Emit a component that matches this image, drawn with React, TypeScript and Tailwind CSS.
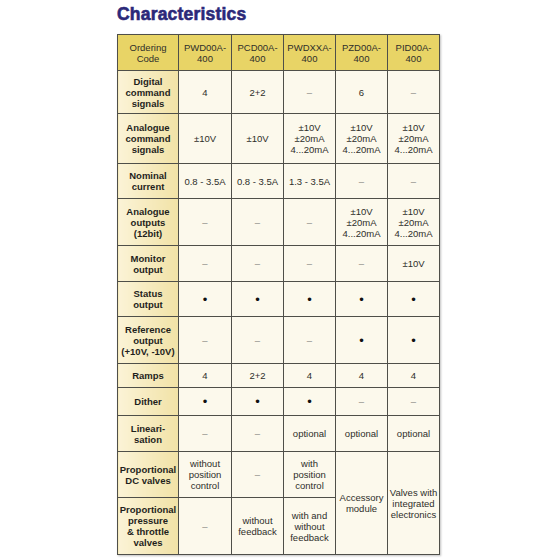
import React from 'react';

type Cell = { text: string[]; kind?: 'dash' | 'dot' | 'text'; rowSpan?: number };

const D: Cell = { text: ['–'], kind: 'dash' };
const B: Cell = { text: ['•'], kind: 'dot' };
const t = (...lines: string[]): Cell => ({ text: lines, kind: 'text' });

const heads = [['PWD00A-', '400'], ['PCD00A-', '400'], ['PWDXXA-', '400'], ['PZD00A-', '400'], ['PID00A-', '400']];

const rows: { label: string[]; h: string; cells: Cell[] }[] = [
  { label: ['Digital', 'command', 'signals'], h: 'h-[43px]', cells: [t('4'), t('2+2'), D, t('6'), D] },
  {
    label: ['Analogue', 'command', 'signals'],
    h: 'h-[50px]',
    cells: [t('±10V'), t('±10V'), t('±10V', '±20mA', '4...20mA'), t('±10V', '±20mA', '4...20mA'), t('±10V', '±20mA', '4...20mA')],
  },
  { label: ['Nominal', 'current'], h: 'h-[35px]', cells: [t('0.8 - 3.5A'), t('0.8 - 3.5A'), t('1.3 - 3.5A'), D, D] },
  {
    label: ['Analogue', 'outputs', '(12bit)'],
    h: 'h-[47px]',
    cells: [D, D, D, t('±10V', '±20mA', '4...20mA'), t('±10V', '±20mA', '4...20mA')],
  },
  { label: ['Monitor', 'output'], h: 'h-[36px]', cells: [D, D, D, D, t('±10V')] },
  { label: ['Status', 'output'], h: 'h-[35px]', cells: [B, B, B, B, B] },
  { label: ['Reference', 'output', '(+10V, -10V)'], h: 'h-[47px]', cells: [D, D, D, B, B] },
  { label: ['Ramps'], h: 'h-[24px]', cells: [t('4'), t('2+2'), t('4'), t('4'), t('4')] },
  { label: ['Dither'], h: 'h-[28px]', cells: [B, B, B, D, D] },
  { label: ['Lineari-', 'sation'], h: 'h-[36px]', cells: [D, D, t('optional'), t('optional'), t('optional')] },
  {
    label: ['Proportional', 'DC valves'],
    h: 'h-[46px]',
    cells: [
      t('without', 'position', 'control'),
      D,
      t('with', 'position', 'control'),
      { text: ['Accessory', 'module'], kind: 'text', rowSpan: 2 },
      { text: ['Valves with', 'integrated', 'electronics'], kind: 'text', rowSpan: 2 },
    ],
  },
  {
    label: ['Proportional', 'pressure', '& throttle', 'valves'],
    h: 'h-[57px]',
    cells: [D, t('without', 'feedback'), t('with and', 'without', 'feedback')],
  },
];

const bd = 'border-[1.5px] border-[#4f4f49]';

function Lines({ lines }: { lines: string[] }) {
  return (
    <>
      {lines.map((l, i) => (
        <div key={i}>{l}</div>
      ))}
    </>
  );
}

export default function App() {
  return (
    <div className="w-[560px] h-[560px] bg-white font-['Liberation_Sans',Arial,sans-serif]">
      <div className="pl-[117px] pt-[3px]">
        <h1 className="text-[17.5px] leading-[22px] font-bold text-[#2b2979] [-webkit-text-stroke:0.6px_#2b2979] tracking-[0.2px]">
          Characteristics
        </h1>
        <table className="mt-[9px] table-fixed border-collapse w-[322px] text-[9.5px] leading-[11px] text-[#2e2e2a] shadow-[1px_1px_2px_rgba(0,0,0,0.25)]">
          <colgroup>
            <col className="w-[61px]" />
            <col className="w-[53px]" />
            <col className="w-[52px]" />
            <col className="w-[52px]" />
            <col className="w-[52px]" />
            <col className="w-[52px]" />
          </colgroup>
          <thead>
            <tr className="h-[36px] bg-[#e8d466]">
              <th className={`${bd} font-normal text-center p-0`}>
                <Lines lines={['Ordering', 'Code']} />
              </th>
              {heads.map((h) => (
                <th key={h[0]} className={`${bd} font-normal text-center p-0`}>
                  <Lines lines={h} />
                </th>
              ))}
            </tr>
          </thead>
          <tbody>
            {rows.map((r) => (
              <tr key={r.label.join(' ')} className={r.h}>
                <td className={`${bd} p-0 text-center font-bold text-[#1f1f1c] bg-gradient-to-r from-[#fbf3d6] to-[#f1e2a6]`}>
                  <Lines lines={r.label} />
                </td>
                {r.cells.map((c, i) => (
                  <td
                    key={i}
                    rowSpan={c.rowSpan}
                    className={`${bd} p-0 text-center bg-[#fcf9ec] ${
                      c.kind === 'dash' ? 'text-[#8a8a84]' : c.kind === 'dot' ? 'text-[#111] text-[13px]' : ''
                    }`}
                  >
                    <Lines lines={c.text} />
                  </td>
                ))}
              </tr>
            ))}
          </tbody>
        </table>
      </div>
    </div>
  );
}
